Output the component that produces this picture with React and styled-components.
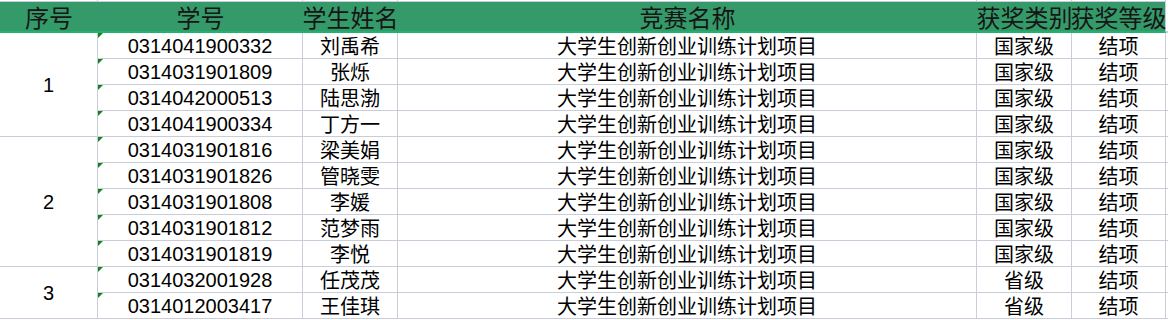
import React from 'react';
import styled, { createGlobalStyle } from 'styled-components';

const GlobalStyle = createGlobalStyle`
  html, body {
    margin: 0;
    padding: 0;
    background: #ffffff;
  }
  body {
    font-family: "Liberation Sans", "Noto Sans CJK SC", sans-serif;
    color: #000;
  }
`;

const COLS = '98px 205px 95px 579px 95px 94px 2px';
const LINE = '#c9cdd9';

const groups = [
  {
    seq: '1',
    level: '国家级',
    rows: [
      ['0314041900332', '刘禹希'],
      ['0314031901809', '张烁'],
      ['0314042000513', '陆思渤'],
      ['0314041900334', '丁方一'],
    ],
  },
  {
    seq: '2',
    level: '国家级',
    rows: [
      ['0314031901816', '梁美娟'],
      ['0314031901826', '管晓雯'],
      ['0314031901808', '李媛'],
      ['0314031901812', '范梦雨'],
      ['0314031901819', '李悦'],
    ],
  },
  {
    seq: '3',
    level: '省级',
    rows: [
      ['0314032001928', '任茂茂'],
      ['0314012003417', '王佳琪'],
    ],
  },
];

const headers = ['序号', '学号', '学生姓名', '竞赛名称', '获奖类别', '获奖等级'];

const Sheet = styled.div`
  width: 1168px;
  height: 320px;
  overflow: hidden;
`;

const Row = styled.div`
  display: grid;
  grid-template-columns: ${COLS};
`;

const StripCell = styled.div`
  height: 2px;
  box-sizing: border-box;
  border-right: 1px solid ${LINE};
  border-bottom: 1px solid ${LINE};
`;

const HeadCell = styled.div`
  height: 31px;
  box-sizing: border-box;
  background: ${({ $blank }) => ($blank ? '#ffffff' : '#359a6a')};
  border-bottom: 2px solid ${({ $blank }) => ($blank ? LINE : '#1fb36e')};
  border-right: ${({ $last }) => ($last ? `1px solid ${LINE}` : 'none')};
  display: flex;
  align-items: center;
  justify-content: center;
  white-space: nowrap;
  font-family: "Noto Sans CJK SC", sans-serif;
  font-size: 24px;
  line-height: 1;
  color: #161616;
`;

const Body = styled.div`
  display: grid;
  grid-template-columns: ${COLS};
  grid-auto-rows: 26px;
`;

const Cell = styled.div`
  position: relative;
  box-sizing: border-box;
  border-right: 1px solid ${LINE};
  border-bottom: 1px solid ${LINE};
  display: flex;
  align-items: center;
  justify-content: center;
  white-space: nowrap;
  font-size: 20px;
  line-height: 1;
  font-family: ${({ $cjk }) =>
    $cjk ? '"Noto Sans CJK SC", sans-serif' : '"Liberation Sans", sans-serif'};

  ${({ $flag }) =>
    $flag &&
    `
    &::before {
      content: '';
      position: absolute;
      top: 0;
      left: 0;
      border-top: 5px solid #13841b;
      border-right: 5px solid transparent;
    }
  `}
`;

const SeqCell = styled(Cell)`
  grid-column: 1;
  grid-row: span ${({ $span }) => $span};
`;

const Filler = styled.div`
  box-sizing: border-box;
  border-bottom: 1px solid ${LINE};
`;

export default function App() {
  return (
    <>
      <GlobalStyle />
      <Sheet>
        <Row>
          {headers.map((h) => (
            <StripCell key={h} />
          ))}
          <div />
        </Row>
        <Row>
          {headers.map((h, i) => (
            <HeadCell key={h} $last={i === headers.length - 1}>
              {h}
            </HeadCell>
          ))}
          <HeadCell $blank />
        </Row>
        <Body>
          {groups.map((g) => (
            <React.Fragment key={g.seq}>
              <SeqCell $span={g.rows.length}>{g.seq}</SeqCell>
              {g.rows.map(([id, name]) => (
                <React.Fragment key={id}>
                  <Cell $flag>{id}</Cell>
                  <Cell $cjk>{name}</Cell>
                  <Cell $cjk>大学生创新创业训练计划项目</Cell>
                  <Cell $cjk>{g.level}</Cell>
                  <Cell $cjk>结项</Cell>
                  <Filler />
                </React.Fragment>
              ))}
            </React.Fragment>
          ))}
        </Body>
      </Sheet>
    </>
  );
}
